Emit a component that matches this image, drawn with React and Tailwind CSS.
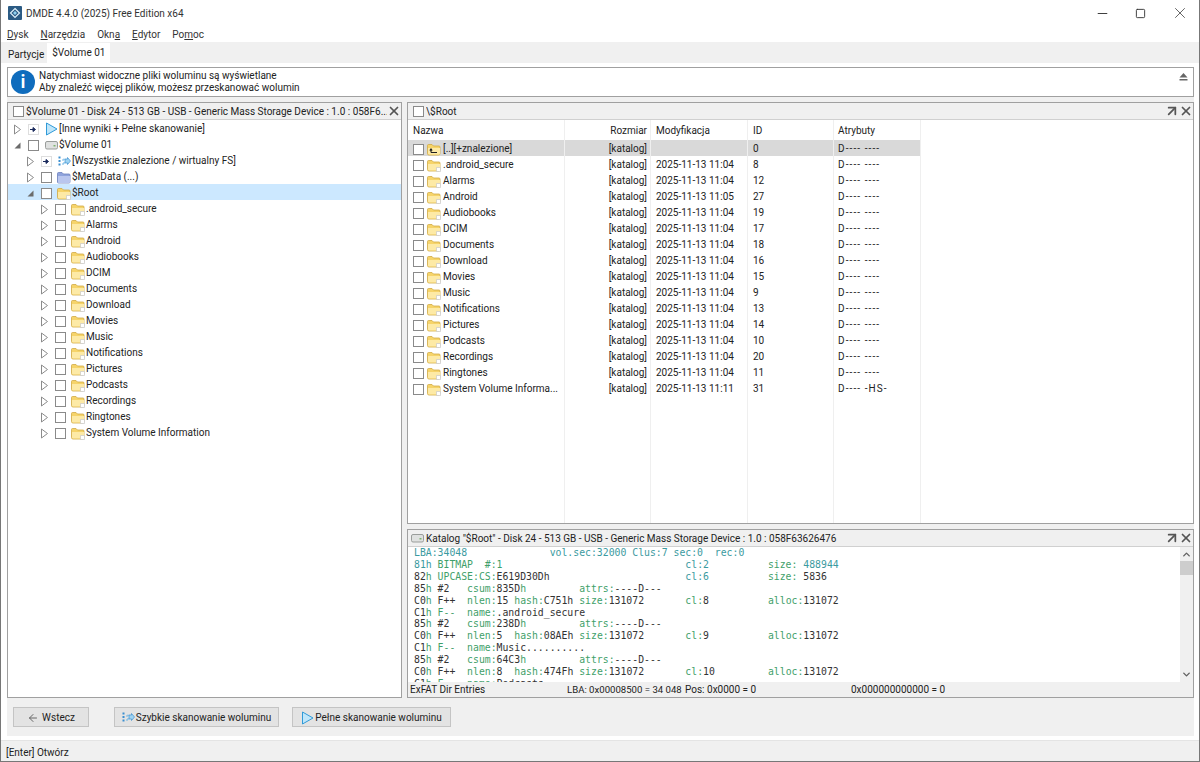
import { X, Minus, Square, ArrowLeft, ArrowUpRight, ChevronUp, ChevronDown } from "lucide-react";

const folders = [
  ".android_secure", "Alarms", "Android", "Audiobooks", "DCIM", "Documents", "Download", "Movies",
  "Music", "Notifications", "Pictures", "Podcasts", "Recordings", "Ringtones", "System Volume Information",
];

const files = [
  [".android_secure", "2025-11-13 11:04", "8", "D---- ----"],
  ["Alarms", "2025-11-13 11:04", "12", "D---- ----"],
  ["Android", "2025-11-13 11:05", "27", "D---- ----"],
  ["Audiobooks", "2025-11-13 11:04", "19", "D---- ----"],
  ["DCIM", "2025-11-13 11:04", "17", "D---- ----"],
  ["Documents", "2025-11-13 11:04", "18", "D---- ----"],
  ["Download", "2025-11-13 11:04", "16", "D---- ----"],
  ["Movies", "2025-11-13 11:04", "15", "D---- ----"],
  ["Music", "2025-11-13 11:04", "9", "D---- ----"],
  ["Notifications", "2025-11-13 11:04", "13", "D---- ----"],
  ["Pictures", "2025-11-13 11:04", "14", "D---- ----"],
  ["Podcasts", "2025-11-13 11:04", "10", "D---- ----"],
  ["Recordings", "2025-11-13 11:04", "20", "D---- ----"],
  ["Ringtones", "2025-11-13 11:04", "11", "D---- ----"],
  ["System Volume Informa...", "2025-11-13 11:11", "31", "D---- -HS-"],
];

// g = green label, t = teal, d = dark value
const hexLines = [
  [["t", "LBA:34048              vol.sec:32000 Clus:7 sec:0  rec:0"]],
  [["t", "81h "], ["g", "BITMAP  #:1"], ["t", "                               cl:2          "], ["g", "size: "], ["t", "488944"]],
  [["d", "82"], ["g", "h UPCASE:CS:"], ["d", "E619D30Dh"], ["t", "                       cl:6          "], ["g", "size: "], ["d", "5836"]],
  [["d", "85"], ["g", "h "], ["d", "#2"], ["g", "   csum:"], ["d", "835D"], ["g", "h"], ["g", "         attrs:"], ["d", "----D---"]],
  [["d", "C0"], ["g", "h "], ["d", "F++"], ["g", "  nlen:"], ["d", "15"], ["g", " hash:"], ["d", "C751h"], ["g", " size:"], ["d", "131072"], ["g", "       cl:"], ["d", "8"], ["g", "          alloc:"], ["d", "131072"]],
  [["d", "C1"], ["g", "h F--  name:"], ["d", ".android_secure"]],
  [["d", "85"], ["g", "h "], ["d", "#2"], ["g", "   csum:"], ["d", "238D"], ["g", "h"], ["g", "         attrs:"], ["d", "----D---"]],
  [["d", "C0"], ["g", "h "], ["d", "F++"], ["g", "  nlen:"], ["d", "5"], ["g", "  hash:"], ["d", "08AEh"], ["g", " size:"], ["d", "131072"], ["g", "       cl:"], ["d", "9"], ["g", "          alloc:"], ["d", "131072"]],
  [["d", "C1"], ["g", "h F--  name:"], ["d", "Music.........."]],
  [["d", "85"], ["g", "h "], ["d", "#2"], ["g", "   csum:"], ["d", "64C3"], ["g", "h"], ["g", "         attrs:"], ["d", "----D---"]],
  [["d", "C0"], ["g", "h "], ["d", "F++"], ["g", "  nlen:"], ["d", "8"], ["g", "  hash:"], ["d", "474Fh"], ["g", " size:"], ["d", "131072"], ["g", "       cl:"], ["d", "10"], ["g", "         alloc:"], ["d", "131072"]],
  [["d", "C1"], ["g", "h F--  name:"], ["d", "Podcasts"]],
];

const hexColor = { g: "text-[#3f9f6a]", t: "text-[#3a9aa0]", d: "text-[#333333]" };

function Checkbox({ className = "" }) {
  return <span className={"block w-[11px] h-[11px] shrink-0 border border-[#8a8a8a] bg-white " + className} />;
}

function Expander({ open }) {
  return (
    <svg width="9" height="11" viewBox="0 0 9 11" className="shrink-0">
      {open ? (
        <path d="M7.5 2.5 V8.5 H1.5 Z" fill="#6b6b6b" />
      ) : (
        <path d="M1.5 1 L7.5 5.5 L1.5 10 Z" fill="white" stroke="#8c8c8c" />
      )}
    </svg>
  );
}

function Folder({ up }) {
  return (
    <svg width="14" height="13" viewBox="0 0 14 13" className="shrink-0">
      <path d="M0.5 2.5 Q0.5 1.5 1.5 1.5 H5 L6.5 3 H12 Q13 3 13 4 V10.5 Q13 12 11.5 12 H2 Q0.5 12 0.5 10.5 Z" fill="#f6d46a" stroke="#d0aa45" strokeWidth="0.8" />
      <path d="M1 5 H13 V10.5 Q13 11.6 11.5 11.6 H2 Q1 11.6 1 10.5 Z" fill="#fdeaa6" />
      {up ? (
        <path d="M4 9.5 H10 M4 9.5 V6.5 M2.8 7.5 L4 6 L5.2 7.5" stroke="#1f1f1f" strokeWidth="1.1" fill="none" />
      ) : (
        <path d="M9.5 8.5 H13.5 V12.5 H9.5 Z" fill="#ffffff" stroke="#c7c7c7" strokeWidth="0.7" />
      )}
    </svg>
  );
}

function JumpBox() {
  return (
    <svg width="11" height="11" viewBox="0 0 11 11" className="shrink-0">
      <rect x="0.5" y="0.5" width="10" height="10" fill="white" stroke="#bdbdbd" strokeDasharray="1 1" />
      <path d="M2 5.5 H7 M5 3.5 L7.5 5.5 L5 7.5 Z" stroke="#1b2a5c" strokeWidth="1" fill="#1b2a5c" />
    </svg>
  );
}

function PlayIcon() {
  return (
    <svg width="13" height="14" viewBox="0 0 13 14" className="shrink-0">
      <path d="M1.5 1 L12 7 L1.5 13 Z" fill="#bfe6fa" stroke="#2f9ad8" strokeWidth="1" />
    </svg>
  );
}

function QuickIcon() {
  return (
    <svg width="13" height="11" viewBox="0 0 13 11" className="shrink-0">
      <rect x="0.5" y="0.5" width="2" height="2" fill="#3c8fd0" />
      <rect x="0.5" y="4" width="2" height="2" fill="#3c8fd0" />
      <rect x="0.5" y="7.5" width="2" height="2" fill="#3c8fd0" />
      <path d="M4 4 H6 V2.5 M4 8 H6 V6" stroke="#6fb7e6" fill="none" />
      <path d="M7 3 H9.5 V1.5 L12.5 5 L9.5 8.5 V7 H7 Z" fill="#9fd4f2" stroke="#3c8fd0" strokeWidth="0.7" />
    </svg>
  );
}

function DriveIcon() {
  return (
    <svg width="13" height="10" viewBox="0 0 13 10" className="shrink-0">
      <rect x="0.5" y="1.5" width="12" height="7.5" rx="1.5" fill="#dfe1e0" stroke="#9a9d9b" />
      <rect x="8.5" y="5" width="2" height="1.5" fill="#7fb46f" />
    </svg>
  );
}

function MetaFolder() {
  return (
    <svg width="14" height="13" viewBox="0 0 14 13" className="shrink-0">
      <path d="M0.5 2.5 Q0.5 1.5 1.5 1.5 H5 L6.5 3 H12 Q13 3 13 4 V11 Q13 12 12 12 H1.5 Q0.5 12 0.5 11 Z" fill="#8fa3dc" stroke="#6c80bd" strokeWidth="0.8" />
      <path d="M1 5 H13 V11 Q13 12 12 12 H1.5 Q1 12 1 11 Z" fill="#b9c6ee" />
    </svg>
  );
}

function TreeRow({ indent, open, box, icon, label, selected }) {
  return (
    <div className={"flex items-center h-4 pt-[2px] whitespace-nowrap " + indent + (selected ? " bg-[#cce8ff]" : "")}>
      <Expander open={open} />
      <span className="ml-[6px] w-[11px] shrink-0">{box || <Checkbox />}</span>
      <span className="ml-[5px] w-[14px] shrink-0 flex justify-center">{icon}</span>
      <span className="ml-[1px]">{label}</span>
    </div>
  );
}

function PanelHeader({ check, children, wide }) {
  return (
    <div className="flex items-center h-[17px] bg-[#f0f0f0] border-b border-[#d0d0d0] pl-[5px] shrink-0 whitespace-nowrap">
      {check}
      <span className="ml-[2px] pt-[2px] flex-1 min-w-0 overflow-hidden">{children}</span>
      {wide && <ArrowUpRight size={16} strokeWidth={2.6} className="text-[#555555] shrink-0 -mr-px" />}
      <X size={14} strokeWidth={3} className="text-[#555555] shrink-0" />
    </div>
  );
}

function Btn({ className, children }) {
  return (
    <div className={"h-[20px] flex items-center justify-center bg-[#e3e3e3] border border-[#c4c4c4] text-[#222222] whitespace-nowrap " + className}>
      {children}
    </div>
  );
}

function Menu({ before, u, after }) {
  return (
    <span>
      {before}
      <span className="underline">{u}</span>
      {after}
    </span>
  );
}

export default function App() {
  return (
    <div className="w-[1200px] h-[762px] flex flex-col bg-white border-x border-b border-[#777777] overflow-hidden text-[10px] leading-[14px] text-[#222222] font-['Roboto','Noto_Sans',sans-serif]">
      {/* TITLE BAR */}
      <div className="flex items-center h-[26px] shrink-0 bg-white pl-[7px]">
        <svg width="14" height="14" viewBox="0 0 14 14" className="shrink-0">
          <rect width="14" height="14" rx="1" fill="#2b5b84" />
          <path d="M7 2.5 L11.5 7 L7 11.5 L2.5 7 Z" fill="none" stroke="#dff1fb" strokeWidth="1.2" />
          <path d="M7 5 L9 7 L7 9 L5 7 Z" fill="#8fd0ee" />
        </svg>
        <span className="ml-[4px] pt-[2px] flex-1 text-[#333333]">DMDE 4.4.0 (2025) Free Edition x64</span>
        <Minus size={15} strokeWidth={1.5} className="text-[#333333] mr-[25px]" />
        <Square size={11} strokeWidth={2} className="text-[#333333] mr-[25px]" />
        <X size={18} strokeWidth={1} className="text-[#333333] mr-[10px]" />
      </div>

      {/* MENU */}
      <div className="flex items-center gap-[12px] h-[16px] pt-[2px] shrink-0 pl-[6px] text-[#333333]">
        <Menu before="" u="D" after="ysk" />
        <Menu before="" u="N" after="arzędzia" />
        <Menu before="Okn" u="a" after="" />
        <Menu before="" u="E" after="dytor" />
        <Menu before="Po" u="m" after="oc" />
      </div>

      {/* TABS */}
      <div className="flex items-end h-[21px] shrink-0 bg-[#f0f0f0] pl-[7px]">
        <span className="h-[15px] pr-[3px]">Partycje</span>
        <span className="h-[20px] px-[5px] pt-[3px] bg-white">$Volume 01</span>
      </div>

      {/* MAIN */}
      <div className="flex-1 flex flex-col min-h-0 bg-white pt-[4px] pb-[4px] pl-[6px] pr-[5px]">
        <div className="flex-1 flex flex-col min-h-0 bg-[#f0f0f0] gap-[5px]">
          {/* INFO */}
          <div className="flex items-center h-[30px] shrink-0 bg-white border border-[#a0a0a0] pl-[3px] pr-[5px]">
            <span className="w-[24px] h-[24px] rounded-full bg-[#0f6cbd] flex items-center justify-center text-white text-[19px] font-semibold shrink-0">i</span>
            <div className="ml-[4px] flex-1 leading-[12.5px]">
              <div>Natychmiast widoczne pliki woluminu są wyświetlane</div>
              <div>Aby znaleźć więcej plików, możesz przeskanować wolumin</div>
            </div>
            <svg width="9" height="8" viewBox="0 0 9 8" className="self-start mt-[5px]">
              <path d="M4.5 0 L8.5 4.5 H0.5 Z M0.5 6 H8.5 V7.5 H0.5 Z" fill="#666666" />
            </svg>
          </div>

          {/* PANELS */}
          <div className="flex-1 flex gap-[5px] min-h-0">
            {/* TREE */}
            <div className="w-[395px] shrink-0 flex flex-col bg-white border border-[#a0a0a0]">
              <PanelHeader check={<Checkbox />}>
                $Volume 01 - Disk 24 - 513 GB - USB - Generic Mass Storage Device : 1.0 : 058F6...
              </PanelHeader>
              <div>
                <TreeRow indent="pl-[5px]" box={<JumpBox />} icon={<PlayIcon />} label="[Inne wyniki + Pełne skanowanie]" />
                <TreeRow indent="pl-[5px]" open icon={<DriveIcon />} label="$Volume 01" />
                <TreeRow indent="pl-[18px]" box={<JumpBox />} icon={<QuickIcon />} label="[Wszystkie znalezione / wirtualny FS]" />
                <TreeRow indent="pl-[18px]" icon={<MetaFolder />} label="$MetaData (...)" />
                <TreeRow indent="pl-[18px]" open selected icon={<Folder />} label="$Root" />
                {folders.map((name) => (
                  <TreeRow key={name} indent="pl-[32px]" icon={<Folder />} label={name} />
                ))}
              </div>
            </div>

            <div className="flex-1 flex flex-col gap-[5px] min-w-0">
              {/* FILE LIST */}
              <div className="flex-1 flex flex-col min-h-0 bg-white border border-[#a0a0a0]">
                <PanelHeader wide check={<Checkbox />}>
                  \$Root
                </PanelHeader>
                <div className="relative flex-1 min-h-0">
                  <div className="flex h-[20px] pt-[2px] items-center w-[512px]">
                    <span className="w-[156px] pl-[5px]">Nazwa</span>
                    <span className="w-[86px] pr-[3px] text-right">Rozmiar</span>
                    <span className="w-[97px] pl-[6px]">Modyfikacja</span>
                    <span className="w-[86px] pl-[6px]">ID</span>
                    <span className="w-[87px] pl-[5px]">Atrybuty</span>
                  </div>
                  <div className="flex h-4 pt-[2px] items-center w-[512px] bg-[#d9d9d9]">
                    <span className="w-[156px] pl-[5px] flex items-center">
                      <Checkbox />
                      <span className="ml-[3px]"><Folder up /></span>
                      <span className="ml-[2px]">[..][+znalezione]</span>
                    </span>
                    <span className="w-[86px] pr-[3px] text-right">[katalog]</span>
                    <span className="w-[97px] pl-[6px]"></span>
                    <span className="w-[86px] pl-[6px]">0</span>
                    <span className="w-[87px] pl-[5px] tracking-[1.1px]">D---- ----</span>
                  </div>
                  {files.map((f) => (
                    <div key={f[0]} className="flex h-4 pt-[2px] items-center w-[512px] whitespace-nowrap">
                      <span className="w-[156px] pl-[5px] flex items-center">
                        <Checkbox />
                        <span className="ml-[3px]"><Folder /></span>
                        <span className="ml-[2px]">{f[0]}</span>
                      </span>
                      <span className="w-[86px] pr-[3px] text-right">[katalog]</span>
                      <span className="w-[97px] pl-[6px]">{f[1]}</span>
                      <span className="w-[86px] pl-[6px]">{f[2]}</span>
                      <span className="w-[87px] pl-[5px] tracking-[1.1px]">{f[3]}</span>
                    </div>
                  ))}
                  {/* column separators */}
                  <span className="absolute top-0 bottom-0 left-[156px] w-px bg-[#efefef]" />
                  <span className="absolute top-0 bottom-0 left-[242px] w-px bg-[#efefef]" />
                  <span className="absolute top-0 bottom-0 left-[339px] w-px bg-[#efefef]" />
                  <span className="absolute top-0 bottom-0 left-[425px] w-px bg-[#efefef]" />
                  <span className="absolute top-0 bottom-0 left-[512px] w-px bg-[#efefef]" />
                </div>
              </div>

              {/* DIR ENTRIES */}
              <div className="h-[169px] shrink-0 flex flex-col bg-white border border-[#a0a0a0]">
                <PanelHeader wide check={<span className="-ml-[2px]"><DriveIcon /></span>}>
                  Katalog "$Root" - Disk 24 - 513 GB - USB - Generic Mass Storage Device : 1.0 : 058F63626476
                </PanelHeader>
                <div className="flex-1 flex min-h-0">
                  <div className="flex-1 min-w-0 overflow-hidden pl-[6px] font-['DejaVu_Sans_Mono',monospace] text-[9.8px] leading-[11.9px] whitespace-pre">
                    {hexLines.map((line, i) => (
                      <div key={i}>
                        {line.map((seg, j) => (
                          <span key={j} className={hexColor[seg[0]]}>{seg[1]}</span>
                        ))}
                      </div>
                    ))}
                  </div>
                  <div className="w-[13px] shrink-0 flex flex-col items-center justify-between bg-[#f0f0f0] relative">
                    <ChevronUp size={11} strokeWidth={3} className="text-[#606060] mt-[2px]" />
                    <span className="absolute top-[14px] left-0 w-full h-[14px] bg-[#cdcdcd]" />
                    <ChevronDown size={11} strokeWidth={3} className="text-[#606060] mb-[2px]" />
                  </div>
                </div>
                <div className="flex items-center h-[15px] pt-[1px] shrink-0 bg-[#f0f0f0] whitespace-nowrap pl-[2px]">
                  <span className="w-[157px]">ExFAT Dir Entries</span>
                  <span className="w-[118px] text-[9.6px]">LBA: 0x00008500 = 34 048</span>
                  <span className="w-[166px]">Pos: 0x0000 = 0</span>
                  <span>0x000000000000 = 0</span>
                </div>
              </div>
            </div>
          </div>

          {/* BUTTONS */}
          <div className="flex items-start h-[33px] shrink-0 pl-[6px] pt-[4px]">
            <Btn className="w-[76px] gap-[3px] pt-px">
              <ArrowLeft size={12} className="text-[#666666]" />
              Wstecz
            </Btn>
            <Btn className="ml-[25px] w-[165px] gap-[1px] pt-px">
              <QuickIcon />
              Szybkie skanowanie woluminu
            </Btn>
            <Btn className="ml-[13px] w-[159px] gap-[1px] pt-px">
              <PlayIcon />
              Pełne skanowanie woluminu
            </Btn>
          </div>
        </div>
      </div>

      {/* STATUS BAR */}
      <div className="flex items-center h-[21px] pt-[3px] shrink-0 bg-[#f0f0f0] border-t border-[#e4e4e4] pl-[5px]">
        [Enter] Otwórz
      </div>
    </div>
  );
}
